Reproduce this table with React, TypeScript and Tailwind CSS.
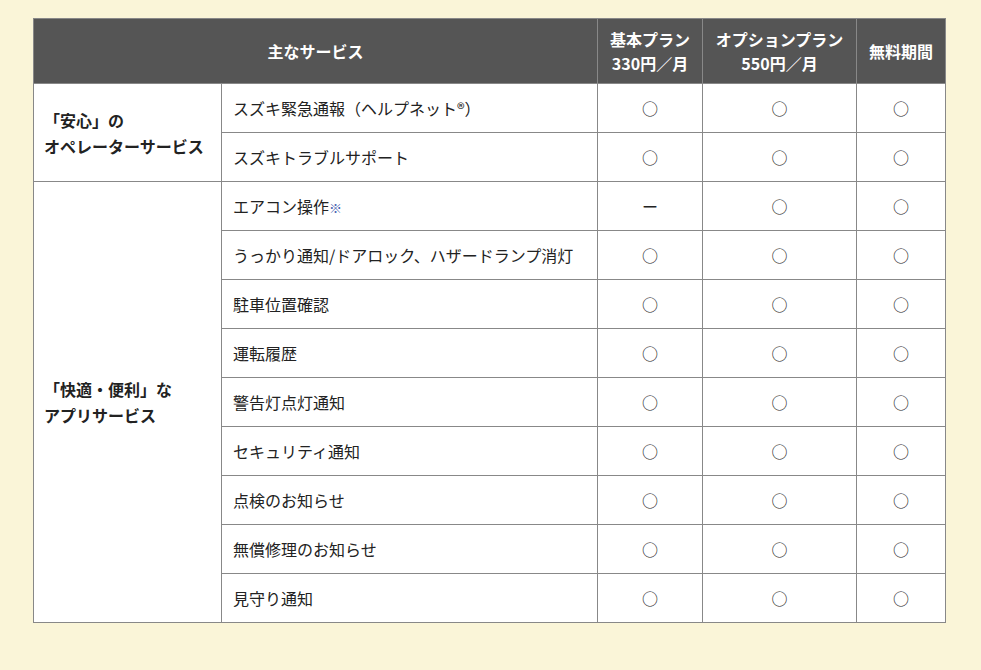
import React from "react";

type Row = { name: string; note?: boolean; basic: string; option: string; free: string };

const groups: { title: string[]; rows: Row[] }[] = [
  {
    title: ["「安心」の", "オペレーターサービス"],
    rows: [
      { name: "スズキ緊急通報（ヘルプネット®）", basic: "○", option: "○", free: "○" },
      { name: "スズキトラブルサポート", basic: "○", option: "○", free: "○" },
    ],
  },
  {
    title: ["「快適・便利」な", "アプリサービス"],
    rows: [
      { name: "エアコン操作", note: true, basic: "ー", option: "○", free: "○" },
      { name: "うっかり通知/ドアロック、ハザードランプ消灯", basic: "○", option: "○", free: "○" },
      { name: "駐車位置確認", basic: "○", option: "○", free: "○" },
      { name: "運転履歴", basic: "○", option: "○", free: "○" },
      { name: "警告灯点灯通知", basic: "○", option: "○", free: "○" },
      { name: "セキュリティ通知", basic: "○", option: "○", free: "○" },
      { name: "点検のお知らせ", basic: "○", option: "○", free: "○" },
      { name: "無償修理のお知らせ", basic: "○", option: "○", free: "○" },
      { name: "見守り通知", basic: "○", option: "○", free: "○" },
    ],
  },
];

const cell = "border border-[#888] bg-white h-[49px] text-center text-[16px]";

export default function App() {
  return (
    <div
      className="min-h-[670px] bg-[#faf5d8] pt-[18px] pl-[33px] text-[#222]"
      style={{ fontFamily: '"Noto Sans CJK JP", "Noto Sans", sans-serif' }}
    >
      <table className="w-[912px] border-collapse table-fixed">
        <colgroup>
          <col className="w-[188px]" />
          <col className="w-[376px]" />
          <col className="w-[105px]" />
          <col className="w-[154px]" />
          <col className="w-[89px]" />
        </colgroup>
        <thead>
          <tr className="bg-[#555] text-white font-bold text-[16px] leading-[24px]">
            <th colSpan={2} className="border border-[#888] h-[65px]">
              主なサービス
            </th>
            <th className="border border-[#888]">
              基本プラン
              <br />
              330円／月
            </th>
            <th className="border border-[#888]">
              オプションプラン
              <br />
              550円／月
            </th>
            <th className="border border-[#888]">無料期間</th>
          </tr>
        </thead>
        <tbody>
          {groups.map((g) =>
            g.rows.map((r, i) => (
              <tr key={r.name}>
                {i === 0 && (
                  <td
                    rowSpan={g.rows.length}
                    className="border border-[#888] bg-white pl-[10px] text-[16px] font-bold leading-[26px]"
                  >
                    {g.title[0]}
                    <br />
                    {g.title[1]}
                  </td>
                )}
                <td className="border border-[#888] bg-white h-[49px] pl-[11px] text-[16px]">
                  {r.name}
                  {r.note && <span className="text-[#4a64b0] text-[13px]">※</span>}
                </td>
                <td className={cell}>{r.basic}</td>
                <td className={cell}>{r.option}</td>
                <td className={cell}>{r.free}</td>
              </tr>
            ))
          )}
        </tbody>
      </table>
    </div>
  );
}
